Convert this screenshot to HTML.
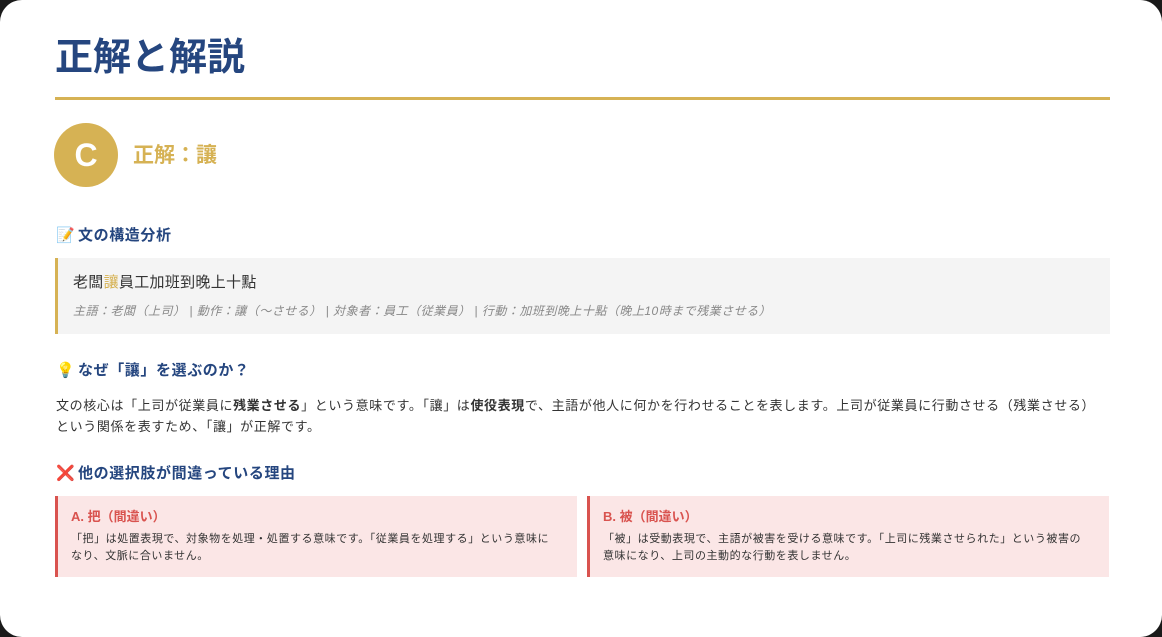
<!DOCTYPE html><html><head><meta charset="utf-8"><style>
*{margin:0;padding:0;box-sizing:border-box}
body{width:1162px;height:637px;background:#1a1a1a;font-family:"Liberation Sans","Noto Sans CJK JP",sans-serif;overflow:hidden}
.card{position:absolute;left:0;top:0;width:1162px;height:637px;background:#fff;border-radius:22px}
.abs{position:absolute}
h1{position:absolute;left:55px;top:33px;font-size:38px;font-weight:bold;color:#25467f;line-height:50px}
.line{left:55px;top:97px;width:1055px;height:3px;background:#d6b254}
.circ{left:54px;top:123px;width:64px;height:64px;border-radius:50%;background:#d6b254;color:#fff;font-size:32px;font-weight:bold;text-align:center;line-height:64px}
.ans{left:133px;top:142px;font-size:21px;font-weight:bold;color:#d6b254;line-height:28px}
.h{position:absolute;left:56px;font-size:15px;font-weight:bold;color:#25467f;line-height:22px;letter-spacing:0.6px}
.h span.i{display:inline-block;width:22px;font-size:15px;letter-spacing:0}
.box{left:55px;top:258px;width:1055px;height:76px;background:#f4f4f4;border-left:3px solid #d6b254}
.s1{left:73px;top:272px;font-size:15px;color:#333;line-height:22px;letter-spacing:0.3px}
.s2{left:73px;top:302px;font-size:12px;color:#888;font-style:italic;line-height:18px;letter-spacing:0.5px}
.p{left:56px;top:395px;width:1060px;font-size:13px;color:#333;line-height:21px;letter-spacing:0.62px}
.w{top:496px;height:81px;background:#fbe6e6;border-left:3px solid #d9534f;padding:12px 13px}
.w b{display:block;color:#d9534f;font-size:13px;line-height:18px}
.w div{font-size:11px;color:#333;line-height:17px;margin-top:5px;letter-spacing:0.55px}
</style></head><body><div class="card">
<h1>正解と解説</h1>
<div class="abs line"></div>
<div class="abs circ">C</div>
<div class="abs ans">正解：讓</div>
<div class="h" style="top:225px"><span class="i">📝</span>文の構造分析</div>
<div class="abs box"></div>
<div class="abs s1">老闆<span style="color:#d6b254">讓</span>員工加班到晚上十點</div>
<div class="abs s2">主語：老闆（上司） | 動作：讓（〜させる） | 対象者：員工（従業員） | 行動：加班到晚上十點（晚上10時まで残業させる）</div>
<div class="h" style="top:360px"><span class="i">💡</span>なぜ「讓」を選ぶのか？</div>
<div class="abs p">文の核心は「上司が従業員に<b>残業させる</b>」という意味です。「讓」は<b>使役表現</b>で、主語が他人に何かを行わせることを表します。上司が従業員に行動させる（残業させる）<br>という関係を表すため、「讓」が正解です。</div>
<div class="h" style="top:463px"><span class="i" style="color:#d9342b">❌</span>他の選択肢が間違っている理由</div>
<div class="abs w" style="left:55px;width:522px"><b>A. 把（間違い）</b><div>「把」は処置表現で、対象物を処理・処置する意味です。「従業員を処理する」という意味に<br>なり、文脈に合いません。</div></div>
<div class="abs w" style="left:587px;width:522px"><b>B. 被（間違い）</b><div>「被」は受動表現で、主語が被害を受ける意味です。「上司に残業させられた」という被害の<br>意味になり、上司の主動的な行動を表しません。</div></div>
</div></body></html>
